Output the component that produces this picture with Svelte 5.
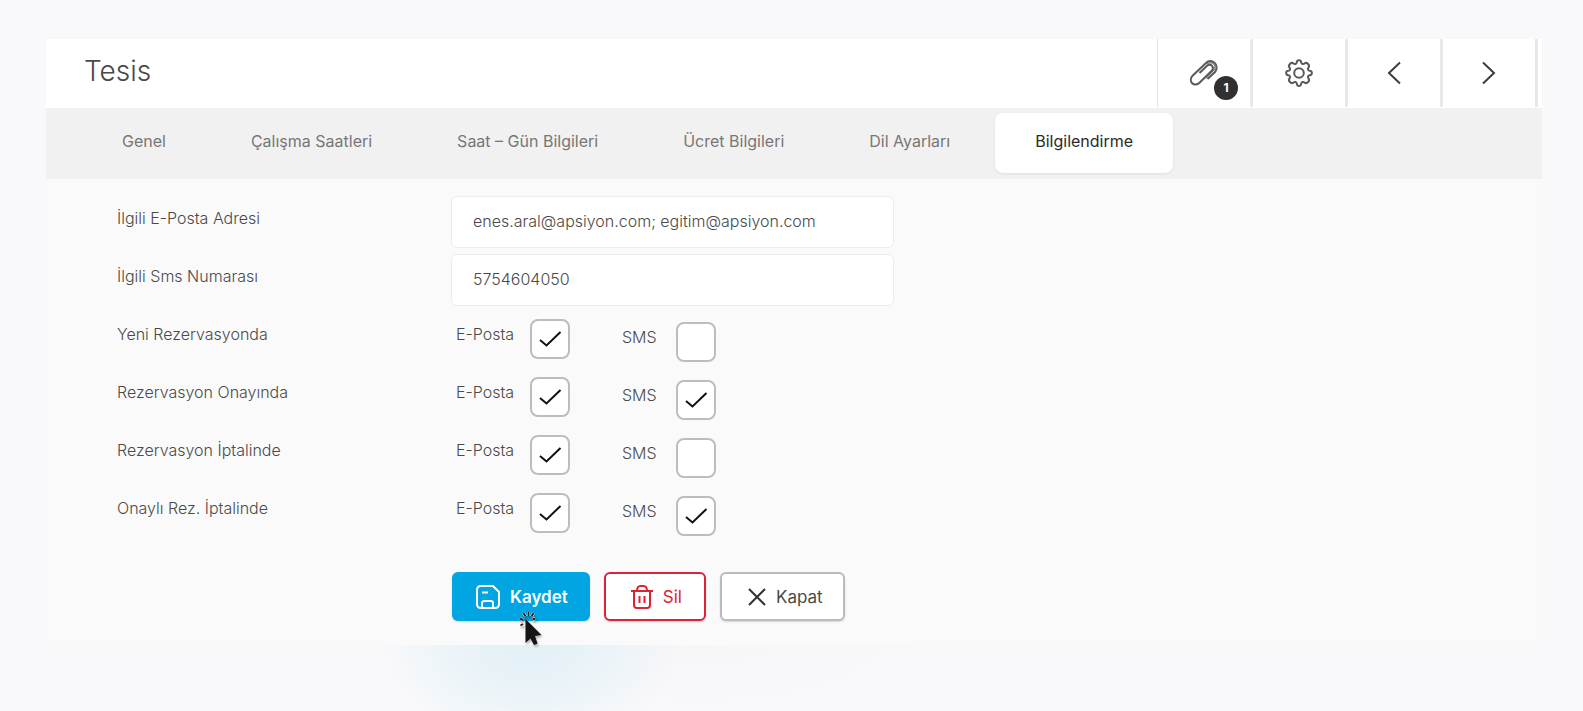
<script>
  let tabs = ['Genel', 'Çalışma Saatleri', 'Saat – Gün Bilgileri', 'Ücret Bilgileri', 'Dil Ayarları', 'Bilgilendirme']
  let active = $state('Bilgilendirme')

  let email = $state('enes.aral@apsiyon.com; egitim@apsiyon.com')
  let phone = $state('5754604050')

  let notices = $state([
    { id: 'new', label: 'Yeni Rezervasyonda', mail: true, sms: false },
    { id: 'approve', label: 'Rezervasyon Onayında', mail: true, sms: true },
    { id: 'cancel', label: 'Rezervasyon İptalinde', mail: true, sms: false },
    { id: 'cancel-approved', label: 'Onaylı Rez. İptalinde', mail: true, sms: true }
  ])
</script>

{#snippet tick()}
  <svg class="tick" width="24" height="18" viewBox="0 0 24 18" aria-hidden="true">
    <path d="M2 10 L8.500 15.500 L22.500 2" />
  </svg>
{/snippet}

<main class="panel">
  <header>
    <h1>Tesis</h1>
    <div class="tools">
      <button aria-label="Ekler">
        <span class="clip">
          <svg width="30" height="28" viewBox="0 0 30 28" aria-hidden="true">
            <path d="M18.500 20 L26 13 C28.500 10 28 6 25.500 3.800 C23 1.500 19.500 1.500 17 4 L3.800 16.500 C1.500 18.800 1.300 22 3 24 C5 26.200 8.200 26 10.500 23.800 L22.500 12 C24.200 10.200 24.200 8 22.800 6.600 C21.300 5.200 19.300 5.500 17.800 7 L10.500 14" />
            <path class="thin" d="M17 19.500 L25 11 C26.500 9 26.400 6.500 24.500 4.800 C22.500 3.200 20 3.400 18 5.200" />
          </svg>
          <span class="badge">1</span>
        </span>
      </button>
      <button aria-label="Ayarlar">
        <svg width="30" height="30" viewBox="0 0 30 30" aria-hidden="true">
          <path d="M12.800 4.300 C13 1.400 17 1.400 17.200 4.300 C17.400 6 19.200 6.600 20.500 5.500 C22.800 3.600 26.400 7.200 24.500 9.500 C23.400 10.800 24 12.600 25.700 12.800 C28.600 13 28.600 17 25.700 17.200 C24 17.400 23.400 19.200 24.500 20.500 C26.400 22.800 22.800 26.400 20.500 24.500 C19.200 23.400 17.400 24 17.200 25.700 C17 28.600 13 28.600 12.800 25.700 C12.600 24 10.800 23.400 9.500 24.500 C7.200 26.400 3.600 22.800 5.500 20.500 C6.600 19.200 6 17.400 4.300 17.200 C1.400 17 1.400 13 4.300 12.800 C6 12.600 6.600 10.800 5.500 9.500 C3.600 7.200 7.200 3.600 9.500 5.500 C10.800 6.600 12.600 6 12.800 4.300 Z" />
          <circle cx="15" cy="15" r="4.800" />
        </svg>
      </button>
      <button aria-label="Önceki">
        <svg class="arrow" width="14" height="24" viewBox="0 0 14 24" aria-hidden="true"><path d="M13 1.500 L2 12 L13 22.500" /></svg>
      </button>
      <button aria-label="Sonraki">
        <svg class="arrow" width="14" height="24" viewBox="0 0 14 24" aria-hidden="true"><path d="M1 1.500 L12 12 L1 22.500" /></svg>
      </button>
    </div>
  </header>

  <nav>
    {#each tabs as tab}
      <button class:active={tab === active} onclick={() => (active = tab)}>{tab}</button>
    {/each}
  </nav>

  <form onsubmit={(e) => e.preventDefault()}>
    <div class="row">
      <label class="name" for="email">İlgili E-Posta Adresi</label>
      <input class="text" id="email" type="text" bind:value={email} />
    </div>
    <div class="row">
      <label class="name" for="phone">İlgili Sms Numarası</label>
      <input class="text" id="phone" type="text" bind:value={phone} />
    </div>

    {#each notices as n (n.id)}
      <div class="row" role="group" aria-labelledby={n.id}>
        <span class="name" id={n.id}>{n.label}</span>
        <label class="check">
          <span>E-Posta</span>
          <span class="box"><input type="checkbox" bind:checked={n.mail} />{@render tick()}</span>
        </label>
        <label class="check sms">
          <span>SMS</span>
          <span class="box"><input type="checkbox" bind:checked={n.sms} />{@render tick()}</span>
        </label>
      </div>
    {/each}

    <div class="actions">
      <button class="save" type="submit">
        <svg width="24" height="24" viewBox="0 0 24 24" aria-hidden="true">
          <path d="M5 1 H17 L23 7 V19 Q23 23 19 23 H5 Q1 23 1 19 V5 Q1 1 5 1 Z M6 23 V18 Q6 16 8.500 16 H14.500 Q17 16 17 18 V23 M6 7.500 H12" />
        </svg>
        Kaydet
        <svg class="cursor" width="26" height="36" viewBox="0 0 26 36" aria-hidden="true">
          <path class="halo" d="M2 7.500 L5 9 M2.500 14.500 L5 13 M5.500 2 L7.500 5.500 M10.500 1 V5 M15.500 2 L13.500 5.500 M17.500 7.500 L14.500 8.500" />
          <path class="rays" d="M2 7.500 L5 9 M2.500 14.500 L5 13 M5.500 2 L7.500 5.500 M10.500 1 V5 M15.500 2 L13.500 5.500 M17.500 7.500 L14.500 8.500" />
          <path class="arrowhead" d="M7.500 8 L7.500 32 L12.500 27.500 L16 34 L19.500 32.500 L17 25 L23.500 24 Z" />
        </svg>
      </button>
      <button class="delete" type="button">
        <svg width="22" height="24" viewBox="0 0 22 24" aria-hidden="true">
          <path d="M0 6 H22 M6 6 Q6 1 9.500 1 H12.500 Q16 1 16 6 M3 6 V20 Q3 23 6 23 H16 Q19 23 19 20 V6 M8.500 11 V18 M13.500 11 V18" />
        </svg>
        Sil
      </button>
      <button class="close" type="button">
        <svg width="18" height="18" viewBox="0 0 18 18" aria-hidden="true"><path d="M1 1 L17 17 M17 1 L1 17" /></svg>
        Kapat
      </button>
    </div>
  </form>
</main>

<style>
  :global(body) {
    min-height: 100vh;
    background:
      radial-gradient(ellipse 150px 110px at 530px 640px, #e2f0f6 0%, #e9f3f8 45%, rgba(249, 249, 251, 0) 100%),
      radial-gradient(ellipse 240px 80px at 700px 640px, #f7f5f7, rgba(249, 249, 251, 0)),
      #f9f9fb;
    font-family: Inter, "Liberation Sans", sans-serif;
    color: #4a4a4a;
  }
  :global(#app) { display: flow-root; }
  button, input {
    font: inherit;
    color: inherit;
    box-sizing: border-box;
    margin: 0;
  }
  button { cursor: pointer; }
  svg {
    fill: none;
    stroke: currentColor;
    stroke-width: 2;
    flex: none;
  }

  .panel {
    margin: 39px 41px 0 46px;
    background: #fafafa;
  }
  header {
    display: flex;
    justify-content: space-between;
    height: 69px;
    padding: 0 4px 0 38px;
    background: #fff;
  }
  h1 {
    margin: 0;
    font-size: 28px;
    line-height: 64px;
    font-weight: 300;
  }
  .tools {
    display: flex;
    height: 68px;
    border-left: 1px solid #e2e2e2;
  }
  .tools button {
    width: 95px;
    padding: 0;
    border: none;
    border-right: 3px solid #e8e8e8;
    background: none;
    display: flex;
    align-items: center;
    justify-content: center;
    color: #5a5a5a;
  }
  .tools .arrow { color: #3c3c3c; }
  .clip {
    position: relative;
    display: flex;
  }
  .clip .thin { stroke-width: 1; }
  .badge {
    position: absolute;
    left: 25px;
    top: 17px;
    width: 24px;
    height: 24px;
    border-radius: 50%;
    background: #303030;
    color: #fff;
    font-size: 12px;
    line-height: 23px;
    font-weight: 700;
    text-align: center;
  }

  nav {
    display: flex;
    gap: 5px;
    height: 71px;
    padding: 5px 36px 6px;
    box-sizing: border-box;
    background: #f1f1f1;
  }
  nav button {
    padding: 0 40px 4px;
    border: none;
    border-radius: 8px;
    background: none;
    color: #777;
    font-size: 16px;
    white-space: nowrap;
  }
  nav .active {
    background: #fff;
    color: #2b2b2b;
    box-shadow: 0 1px 3px rgba(0, 0, 0, 0.08);
  }

  form {
    padding: 17px 71px 24px;
    font-size: 16px;
    font-weight: 300;
  }
  .row {
    display: flex;
    height: 58px;
  }
  .name {
    flex: none;
    width: 334px;
    line-height: 44px;
  }
  .text {
    width: 443px;
    height: 52px;
    padding: 0 21px 2px;
    border: 1px solid #ececec;
    border-radius: 6px;
    background: #fff;
    outline: none;
  }
  .check {
    display: flex;
    justify-content: space-between;
    width: 119px;
    margin-right: 47px;
    padding-left: 5px;
    box-sizing: border-box;
    line-height: 44px;
  }
  .sms {
    width: 99px;
    padding-top: 3px;
  }
  .box {
    display: grid;
    place-items: center;
    width: 40px;
    height: 40px;
    margin-top: 7px;
  }
  .box input {
    grid-area: 1 / 1;
    appearance: none;
    width: 40px;
    height: 40px;
    border: 2px solid #bdbdbd;
    border-radius: 8px;
    background: #fff;
  }
  .tick {
    grid-area: 1 / 1;
    z-index: 1;
    color: #111;
    pointer-events: none;
    visibility: hidden;
  }
  input:checked + .tick { visibility: visible; }

  .actions {
    display: flex;
    gap: 14px;
    padding: 28px 0 0 335px;
  }
  .actions button {
    position: relative;
    display: flex;
    align-items: center;
    gap: 10px;
    height: 49px;
    padding: 0 20px;
    border: 2px solid #bbb;
    border-radius: 6px;
    background: #fff;
    font-size: 17px;
    font-weight: 400;
    box-shadow: 0 1px 2px rgba(0, 0, 0, 0.15);
  }
  .actions .save {
    border-color: #00a5e1;
    background: #00a5e1;
    color: #fff;
    font-weight: 600;
    padding-left: 22px;
  }
  .actions .delete {
    padding: 0 22px 0 25px;
    border-color: #dc2334;
    color: #dc2334;
  }
  .actions .close { padding-left: 26px; }
  .close svg { color: #333; }
  .cursor {
    position: absolute;
    left: 64px;
    top: 37px;
    z-index: 2;
    filter: drop-shadow(1px 2px 1px rgba(0, 0, 0, 0.3));
  }
  .halo { stroke: #fff; stroke-width: 3; }
  .rays { stroke: #222; stroke-width: 2; }
  .arrowhead { fill: #151515; stroke: none; }
</style>
